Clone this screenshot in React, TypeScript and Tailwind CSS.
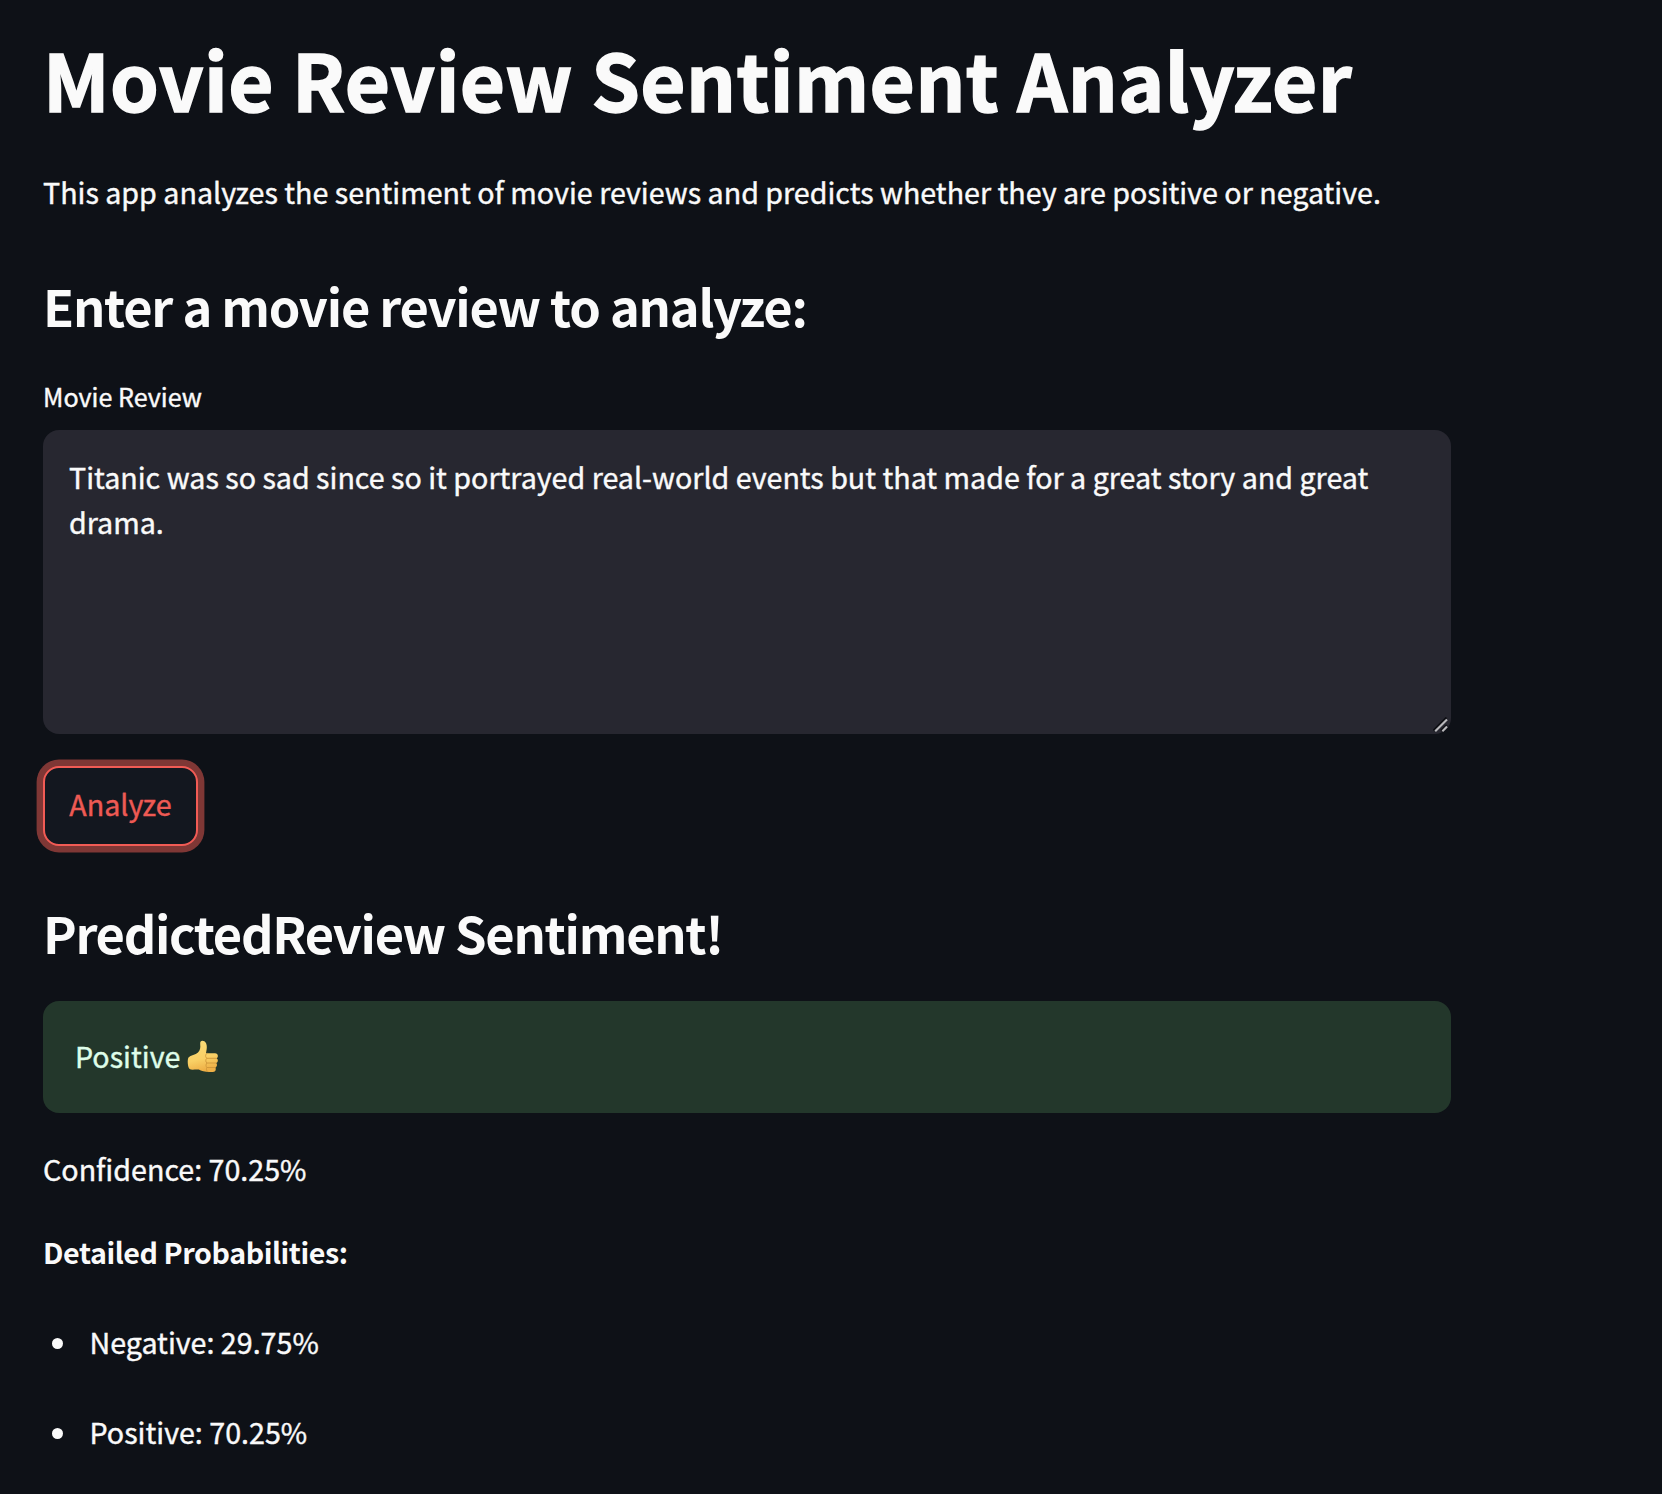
const sans = "font-['Noto_Sans_CJK_SC','Noto_Sans',sans-serif]";

function ThumbsUp() {
  return (
    <svg className="mt-[1px] ml-[7px] h-[33px] w-[32px]" viewBox="0 0 32 33" aria-label="thumbs up">
      <defs>
        <linearGradient id="skin" x1="0" y1="0" x2="0.25" y2="1">
          <stop offset="0" stopColor="#f9dc7a" />
          <stop offset="0.65" stopColor="#f9d065" />
          <stop offset="1" stopColor="#eeb047" />
        </linearGradient>
      </defs>
      <path
        d="M1.5 17.5C3.8 14.8 8.5 15 11 12.4C13.2 10 13.6 7.6 13.2 4.2C13 1.8 14 .8 15.4 .8C18.4 .9 20 4 19.8 7.4C19.8 9.6 19.2 11.5 19 13.2H28C31.6 13.4 31.6 17.8 29.4 18.3C31.5 19.2 31.3 22.6 29 23C30.6 24 30.2 27 28.2 27.4C29.4 28.8 28.8 31.8 26 31.9C20.5 32.6 14.6 31.6 11.8 29.6C8.2 29.2 4.6 30.4 2.6 29C.6 27.2 .2 19.6 1.5 17.5Z"
        fill="url(#skin)"
      />
      <path
        d="M20 18.3H29.4M20 23H29M20 27.5H28.2M20 13.4C18.2 14 18 17.4 20 18.3C18.3 19.3 18.5 22.4 20 23C18.6 24 18.8 26.8 20 27.5C19 28.6 19.4 30.8 20.6 31.8"
        fill="none"
        stroke="#cf973a"
        strokeWidth="0.9"
        strokeLinecap="round"
      />
    </svg>
  );
}

function ResizeGrip() {
  return (
    <svg className="pointer-events-none absolute right-[3px] bottom-[2px] h-[15px] w-[15px]" viewBox="0 0 15 15">
      <path d="M0.5 13.5L13.5 0.5M8 13.8L13.8 8" stroke="#0d0e13" strokeWidth="2" />
      <path d="M2.2 14.2L14 2.4M9.4 14.2L14 9.6" stroke="#b9b9bc" strokeWidth="2.1" />
    </svg>
  );
}

const probabilities = [
  { label: "Negative", value: "29.75%" },
  { label: "Positive", value: "70.25%" },
];

export default function App() {
  return (
    <div
      className={`${sans} min-h-[1494px] bg-[#0e1117] pt-[25px] pl-[43px] text-[28.65px] leading-[51px] text-[#fafafa] [-webkit-text-stroke:0.4px_currentColor]`}
    >
      <main className="flex w-[1408px] flex-col items-start">
        <h1 className="text-[78px] leading-[106px] font-bold tracking-[0.45px] whitespace-nowrap [-webkit-text-stroke:1.5px_currentColor]">
          Movie Review Sentiment Analyzer
        </h1>
        <p className="mt-[35px] whitespace-nowrap">
          This app analyzes the sentiment of movie reviews and predicts whether they are positive or negative.
        </p>
        <h2 className="mt-[55px] text-[50.6px] leading-[67px] font-bold tracking-[-1.24px] whitespace-nowrap [-webkit-text-stroke:0px]">
          Enter a movie review to analyze:
        </h2>
        <label htmlFor="review" className="mt-[37px] text-[25.1px] leading-[40px]">
          Movie Review
        </label>
        <div className="relative mt-[14px] h-[304px] w-full">
          <textarea
            id="review"
            className="block h-full w-full resize-none rounded-[16px] bg-[#272730] px-[26px] py-[24px] leading-[45px] outline-none"
            defaultValue="Titanic was so sad since so it portrayed real-world events but that made for a great story and great drama."
          />
          <ResizeGrip />
        </div>
        <button className="mt-[32px] flex h-[80px] w-[155px] items-center justify-center rounded-[16px] border-2 border-[#f25b55] bg-[#13171f] pb-[5px] text-[#ee5a54] shadow-[0_0_0_6.4px_#7f3735]">
          Analyze
        </button>
        <h2 className="mt-[53px] text-[50.6px] leading-[67px] font-bold tracking-[-1.3px] whitespace-nowrap [-webkit-text-stroke:0px]">
          PredictedReview Sentiment!
        </h2>
        <div className="mt-[35px] flex h-[112px] w-full items-center rounded-[16px] bg-[#23372b] px-[32px] pb-[3px] text-[#dffde9]">
          <span>Positive</span>
          <ThumbsUp />
        </div>
        <p className="mt-[30px]">Confidence: 70.25%</p>
        <p className="mt-[32px] font-bold tracking-[-0.42px] [-webkit-text-stroke:0px]">Detailed Probabilities:</p>
        <ul className="mt-[39px] flex flex-col gap-[39px]">
          {probabilities.map((item) => (
            <li key={item.label} className="flex items-center">
              <span className="mt-[3px] mr-[26.5px] ml-[9px] h-[11px] w-[11px] rounded-full bg-[#fafafa]" />
              {item.label}: {item.value}
            </li>
          ))}
        </ul>
      </main>
    </div>
  );
}
